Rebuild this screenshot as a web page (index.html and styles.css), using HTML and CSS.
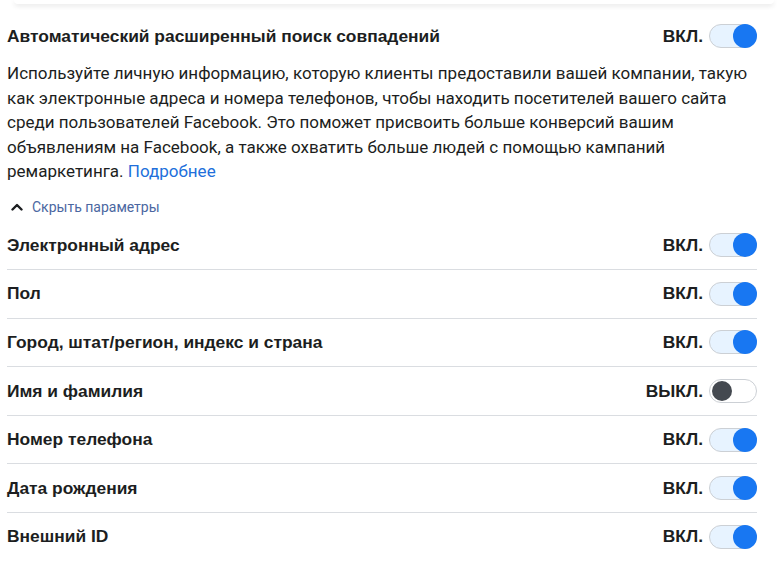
FILE: index.html
```html
<!DOCTYPE html>
<html lang="ru">
<head>
<meta charset="utf-8">
<link rel="stylesheet" href="styles.css">
</head>
<body>
<div class="prev-card"></div>
<div class="page">
  <div class="head-row">
    <div class="title">Автоматический расширенный поиск совпадений</div>
    <div class="state">
      <span class="state-label">ВКЛ.</span>
      <span class="toggle on"><span class="knob"></span></span>
    </div>
  </div>
  <p class="desc">Используйте личную информацию, которую клиенты предоставили вашей компании, такую<br>как электронные адреса и номера телефонов, чтобы находить посетителей вашего сайта<br>среди пользователей Facebook. Это поможет присвоить больше конверсий вашим<br>объявлениям на Facebook, а также охватить больше людей с помощью кампаний<br>ремаркетинга. <a class="more" href="#">Подробнее</a></p>
  <div class="collapse">
    <svg class="chev" width="12" height="8" viewBox="0 0 12 8"><path d="M1.5 6.5 L6 2 L10.5 6.5" fill="none" stroke="#1c1e21" stroke-width="2.4" stroke-linecap="round" stroke-linejoin="round"/></svg>
    <a class="collapse-link" href="#">Скрыть параметры</a>
  </div>
  <div class="rows">
    <div class="row"><span class="label">Электронный адрес</span><div class="state"><span class="state-label">ВКЛ.</span><span class="toggle on"><span class="knob"></span></span></div></div>
    <div class="row"><span class="label">Пол</span><div class="state"><span class="state-label">ВКЛ.</span><span class="toggle on"><span class="knob"></span></span></div></div>
    <div class="row"><span class="label">Город, штат/регион, индекс и страна</span><div class="state"><span class="state-label">ВКЛ.</span><span class="toggle on"><span class="knob"></span></span></div></div>
    <div class="row"><span class="label">Имя и фамилия</span><div class="state"><span class="state-label">ВЫКЛ.</span><span class="toggle off"><span class="knob"></span></span></div></div>
    <div class="row"><span class="label">Номер телефона</span><div class="state"><span class="state-label">ВКЛ.</span><span class="toggle on"><span class="knob"></span></span></div></div>
    <div class="row"><span class="label">Дата рождения</span><div class="state"><span class="state-label">ВКЛ.</span><span class="toggle on"><span class="knob"></span></span></div></div>
    <div class="row last"><span class="label">Внешний ID</span><div class="state"><span class="state-label">ВКЛ.</span><span class="toggle on"><span class="knob"></span></span></div></div>
  </div>
</div>
</body>
</html>
```
FILE: styles.css
```css
html, body {
  margin: 0;
  padding: 0;
  background: #ffffff;
}
body {
  font-family: Roboto, "Liberation Sans", Arial, sans-serif;
  color: #1c1e21;
  overflow: hidden;
}
.prev-card {
  height: 4px;
  margin: 0 4px 0 14px;
  background: #ffffff;
  box-shadow: 0 2px 5px rgba(0, 0, 0, 0.10);
  border-radius: 0 0 6px 6px;
}
.page {
  width: 750px;
  padding: 0 0 0 7px;
}
.head-row {
  display: flex;
  align-items: center;
  justify-content: space-between;
  height: 48px;
  margin-top: 8px;
}
.title,
.label,
.state-label {
  font-family: "Liberation Sans", Arial, sans-serif;
  font-size: 17.4px;
  font-weight: 700;
}
.state {
  display: flex;
  align-items: center;
  gap: 6px;
}
.toggle {
  position: relative;
  display: inline-block;
  width: 46px;
  height: 22px;
  border-radius: 12px;
  border: 1px solid #ccd0d5;
}
.toggle.on {
  background: #e7f3ff;
}
.toggle.off {
  background: #ffffff;
}
.knob {
  position: absolute;
  top: 0;
  width: 24px;
  height: 24px;
  border-radius: 50%;
}
.toggle.on .knob {
  right: -1px;
  top: -1px;
  background: #1877f2;
}
.toggle.off .knob {
  left: 2px;
  top: 1px;
  width: 20px;
  height: 20px;
  background: #444950;
}
.desc {
  margin: 1px 0 0 0;
  font-size: 17px;
  line-height: 24.5px;
  color: #1c1e21;
}
.more {
  color: #216fdb;
  text-decoration: none;
}
.collapse {
  display: flex;
  align-items: center;
  gap: 9px;
  height: 24px;
  margin-top: 11px;
  padding-left: 4px;
}
.collapse-link {
  font-size: 14px;
  color: #4b67a1;
  text-decoration: none;
}
.rows {
  margin-top: 3px;
}
.row {
  display: flex;
  align-items: center;
  justify-content: space-between;
  height: 47.6px;
  border-bottom: 1px solid #dadde1;
}
.row.last {
  border-bottom: none;
}
```
